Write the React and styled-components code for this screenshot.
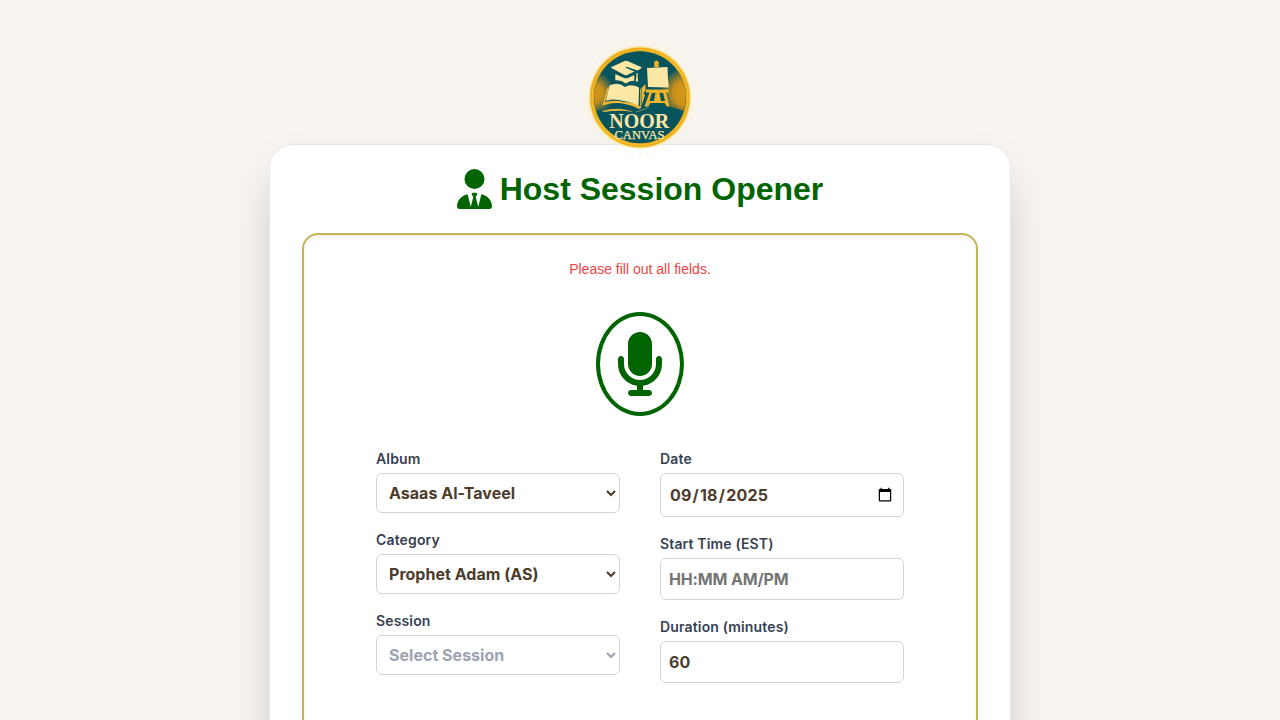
import React, { useState } from 'react';
import styled, { createGlobalStyle } from 'styled-components';
import { FaUserTie, FaMicrophone } from 'react-icons/fa6';

const GlobalStyle = createGlobalStyle`
  *, *::before, *::after { box-sizing: border-box; }
  html, body { margin: 0; height: 100%; overflow: hidden; }
  body {
    background: #f8f5f0;
    font-family: Inter, sans-serif;
    line-height: 1.5;
  }
`;

const Page = styled.main`
  display: flex;
  flex-direction: column;
  align-items: center;
  height: 720px;
  padding-top: 37px;
  overflow: hidden;
`;

const LogoMark = styled.svg`
  position: relative;
  z-index: 1;
  flex: none;
  width: 120px;
  height: 120px;
  margin-bottom: -13px;
  overflow: visible;
`;

const Card = styled.section`
  flex: none;
  width: 742px;
  height: 800px;
  padding: 22px 32px 32px;
  background: #fff;
  border: 1px solid #e5e7eb;
  border-radius: 24px;
  box-shadow: 0 25px 50px -12px rgba(0, 0, 0, 0.25);
`;

const Title = styled.h1`
  display: flex;
  align-items: center;
  justify-content: center;
  gap: 8px;
  height: 44px;
  margin: 0 0 22px;
  color: #006400;
  font: 700 32px/44px 'Liberation Sans', sans-serif;
`;

const TitleIcon = styled(FaUserTie)`
  width: 35px;
  height: 40px;
`;

const Panel = styled.div`
  display: flex;
  flex-direction: column;
  align-items: center;
  height: 640px;
  padding: 24px;
  border: 2px solid #c5b358;
  border-radius: 16px;
  box-shadow: inset 0 2px 4px rgba(0, 0, 0, 0.06);
`;

const ErrorText = styled.p`
  margin: 0 0 32px;
  color: #ef4444;
  font: 400 14px/21px 'Liberation Sans', sans-serif;
`;

const MicBadge = styled.div`
  display: flex;
  margin-bottom: 32px;
  padding: 16px;
  border: 4px solid #006400;
  border-radius: 50%;
  color: #006400;
`;

const MicIcon = styled(FaMicrophone)`
  width: 48px;
  height: 64px;
`;

const Form = styled.form`
  display: grid;
  grid-template-columns: 244px 244px;
  column-gap: 40px;
`;

const Column = styled.div`
  display: flex;
  flex-direction: column;
  gap: 16px;
`;

const Field = styled.label`
  display: flex;
  flex-direction: column;
  gap: 4px;
  color: #374151;
  font-size: 14px;
  font-weight: 600;
  line-height: 21px;
  letter-spacing: 0.15px;
`;

const Input = styled.input`
  width: 100%;
  height: ${(p) => (p.type === 'date' ? 44 : 42)}px;
  padding: 8px;
  border: 1px solid #d1d5db;
  border-radius: 6px;
  background: #fff;
  color: #4b3c2b;
  font: 700 16px/24px Inter, sans-serif;
  letter-spacing: ${(p) => (p.type === 'date' ? '0.2px' : 'normal')};
  outline: none;
  &::placeholder { letter-spacing: -0.15px; }
`;

const Select = styled.select`
  width: 100%;
  height: 40px;
  padding: 8px;
  border: 1px solid #d1d5db;
  border-radius: 6px;
  background: #fff;
  color: ${(p) => (p.disabled ? '#9ca3af' : '#4b3c2b')};
  opacity: 1;
  font: 700 16px/24px Inter, sans-serif;
  letter-spacing: 0.02px;
`;

const rays = Array.from({ length: 48 }, (_, i) => i * 7.5);

function Logo() {
  return (
    <LogoMark viewBox="0 0 120 120" role="img" aria-label="Noor Canvas">
      <defs>
        <linearGradient id="rim" x1="0" y1="0" x2="1" y2="1">
          <stop offset="0" stopColor="#e3a21b" />
          <stop offset="0.5" stopColor="#f0b622" />
          <stop offset="1" stopColor="#e9a81c" />
        </linearGradient>
        <radialGradient id="glowL" gradientUnits="userSpaceOnUse" cx="13" cy="56" r="22">
          <stop offset="0" stopColor="#d99817" />
          <stop offset="0.45" stopColor="#c58f1c" />
          <stop offset="1" stopColor="#c58f1c" stopOpacity="0" />
        </radialGradient>
        <radialGradient id="glowR" gradientUnits="userSpaceOnUse" cx="106" cy="56" r="26">
          <stop offset="0" stopColor="#dc9a17" />
          <stop offset="0.5" stopColor="#c98f1a" />
          <stop offset="1" stopColor="#c58f1c" stopOpacity="0" />
        </radialGradient>
        <clipPath id="disc"><circle cx="60" cy="60" r="45.8" /></clipPath>
      </defs>
      <g stroke="#f9e7a8" strokeWidth="0.6" opacity="0.5">
        {rays.map((a) => (
          <line key={a} x1="60" y1="8" x2="60" y2={a % 15 ? 2 : -1} transform={`rotate(${a} 60 60)`} />
        ))}
      </g>
      <circle cx="60" cy="60.300" r="51.400" fill="#fae79c" />
      <circle cx="60" cy="60.300" r="49.900" fill="url(#rim)" />
      <circle cx="60" cy="60.300" r="47.900" fill="none" stroke="#f8bf2b" strokeWidth="1" />
      <circle cx="60" cy="60.300" r="46" fill="#07545d" />
      <g clipPath="url(#disc)">
        <rect width="120" height="76" fill="url(#glowL)" />
        <rect width="120" height="76" fill="url(#glowR)" />
        <path d="M10 76Q22 72 38 70.500Q50 70 60 75Q72 67 86 69Q99 71 110 77V110H10Z" fill="#07545d" />
      </g>
      <g transform="translate(0 -1)">
        <path d="M30.500 31.500L44.500 25Q46 24.400 47.500 25L62 31.500Q60 33.500 57.500 34.500L46.500 30.700L45.500 31.700L54.500 35.500L47 39Q45.500 39.500 44 38.800Z" fill="#fde7a4" />
        <path d="M35.300 38L44 42Q46 42.800 48 42L54.300 39V45Q50 44.200 46 47.500Q41 43.800 35.300 44.300Z" fill="#fde7a4" />
        <path d="M56.300 37.500L57.700 37V41L58.200 45.500H55.700L56.300 41Z" fill="#f9dc8f" />
        <path d="M29.500 49.500Q38 45.500 45 51Q51 47.500 59 51.500L58.500 71Q52 66 44.500 65.300Q35 62 26 64.500Z" fill="#fde7a4" />
        <path d="M29 51.500L27.300 52L22.300 69.500Q35 65.500 45 68Q53 69.300 59 73L61 72V53L60.200 52.500V70.500Q53 66 44 66Q34 63.500 24.500 66.500Z" fill="#f0b93a" />
        <path d="M61.500 52L65.500 48V55L63.500 57L65 59L61.500 70Z" fill="#efb63a" />
        <path d="M22 75Q39 69.800 54 76.200Q40 73.500 24 76Z" fill="#edb83d" />
        <path d="M56 76Q66 73.500 70 70" fill="none" stroke="#bda247" strokeWidth="0.700" />
        <path d="M74.200 31V26Q76.500 23 78.800 26V31Z" fill="#efb127" />
        <path d="M67 32L87.500 31Q87.700 42 88.800 51.500L68 51Q67.500 41 67 32Z" fill="#fde7a4" />
        <path d="M66 53.500H89V56.500H86L89.500 70.500H87L84.500 67H71L67.500 70.500H64.500L69.500 56.500H66Z" fill="#efb52c" />
        <path d="M71.800 57L75.500 56.800L74 65H69.500ZM79.500 56.800L83.200 57L85 65H81Z" fill="#07545d" />
        <path d="M70.500 67H84.500L86 71H69Z" fill="#07545d" />
      </g>
      <g fill="#fbe6a8" textAnchor="middle" fontFamily="'Liberation Serif', serif">
        <text x="59.300" y="90.700" fontSize="20" fontWeight="700" textLength="60" lengthAdjust="spacingAndGlyphs">NOOR</text>
        <text x="59.500" y="101.500" fontSize="11.500" fontWeight="400" stroke="#fbe6a8" strokeWidth="0.250" textLength="50" lengthAdjust="spacingAndGlyphs">CANVAS</text>
      </g>
    </LogoMark>
  );
}

export default function App() {
  const [album, setAlbum] = useState('Asaas Al-Taveel');
  const [category, setCategory] = useState('Prophet Adam (AS)');
  const [date, setDate] = useState('2025-09-18');
  const [time, setTime] = useState('');
  const [duration, setDuration] = useState('60');

  return (
    <>
      <GlobalStyle />
      <Page>
        <Logo />
        <Card>
          <Title>
            <TitleIcon />
            <span>Host Session Opener</span>
          </Title>
          <Panel>
            <ErrorText>Please fill out all fields.</ErrorText>
            <MicBadge>
              <MicIcon />
            </MicBadge>
            <Form>
              <Column>
                <Field>
                  Album
                  <Select value={album} onChange={(e) => setAlbum(e.target.value)}>
                    <option>Asaas Al-Taveel</option>
                  </Select>
                </Field>
                <Field>
                  Category
                  <Select value={category} onChange={(e) => setCategory(e.target.value)}>
                    <option>Prophet Adam (AS)</option>
                  </Select>
                </Field>
                <Field>
                  Session
                  <Select disabled>
                    <option>Select Session</option>
                  </Select>
                </Field>
              </Column>
              <Column>
                <Field>
                  Date
                  <Input type="date" value={date} onChange={(e) => setDate(e.target.value)} />
                </Field>
                <Field>
                  Start Time (EST)
                  <Input type="text" placeholder="HH:MM AM/PM" value={time} onChange={(e) => setTime(e.target.value)} />
                </Field>
                <Field>
                  Duration (minutes)
                  <Input type="number" value={duration} onChange={(e) => setDuration(e.target.value)} />
                </Field>
              </Column>
            </Form>
          </Panel>
        </Card>
      </Page>
    </>
  );
}
